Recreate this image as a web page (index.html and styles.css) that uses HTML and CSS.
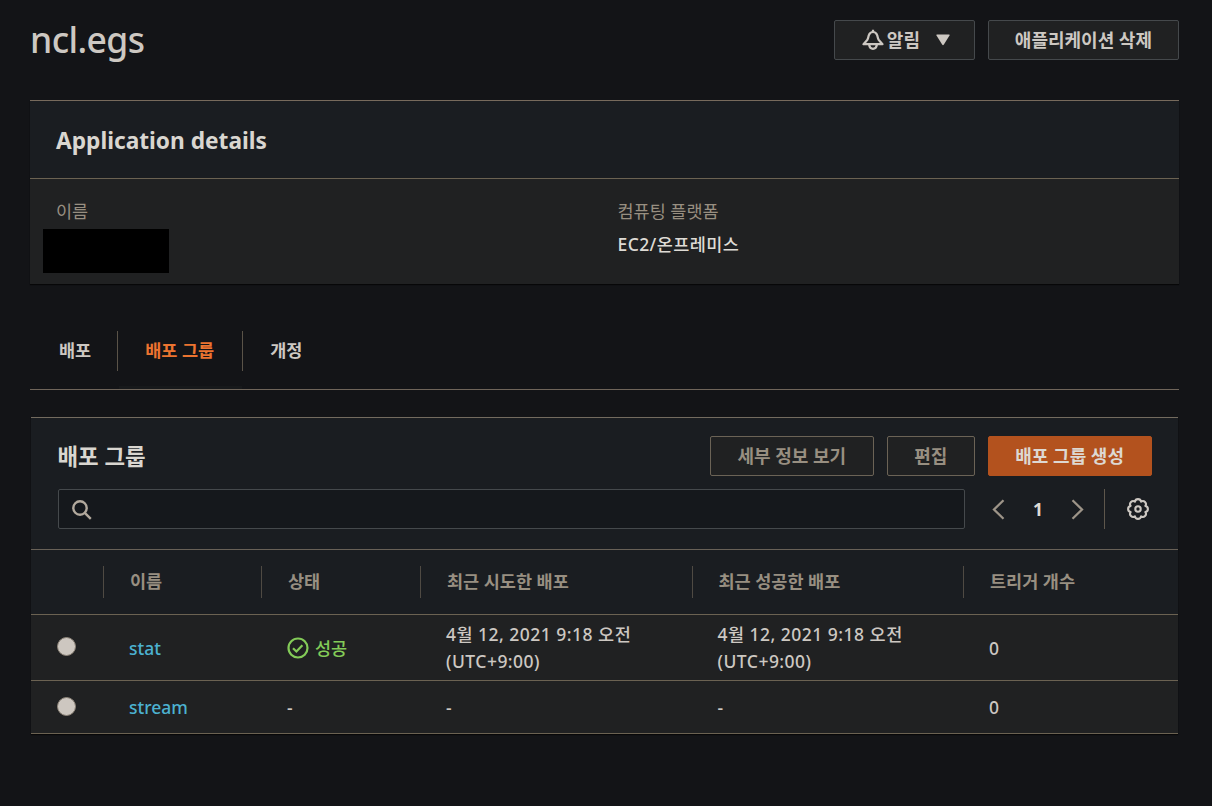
FILE: index.html
```html
<!DOCTYPE html>
<html lang="ko">

<head>
    <meta charset="UTF-8" />
    <meta name="viewport" content="width=device-width, initial-scale=1.0" />
    <title>ncl.egs</title>
    <link rel="stylesheet" href="styles.css">
</head>

<body>

    <header class="page-header">
        <h1>ncl.egs</h1>
        <div class="actions">
            <button class="btn btn-notify">
                <svg class="bell" width="22" height="22" viewBox="0 0 22 22" fill="none" stroke="currentColor" stroke-width="2.2" stroke-linejoin="round">
                    <path d="M11 .8v2.400M1.500 15.200h19L16.800 11c-1.200-1.600-1-3.500-1.700-5C14.300 4 13 3 11 3S7.700 4 6.900 6c-.7 1.500-.5 3.400-1.700 5zM7.200 16.200c.4 2.500 1.700 3.600 3.800 3.600s3.400-1.100 3.800-3.600" />
                </svg>
                <span>알림</span>
                <svg class="caret" width="14" height="12" viewBox="0 0 14 12" fill="currentColor">
                    <path d="M1 .5h12q1 0 .5 1L7.700 10.800q-.7.9-1.400 0L.5 1.500Q0 .5 1 .5z" />
                </svg>
            </button>
            <button class="btn">애플리케이션 삭제</button>
        </div>
    </header>

    <section class="details">
        <h2 class="details-title">Application details</h2>
        <div class="details-body">
            <div class="field">
                <div class="label">이름</div>
                <div class="masked"></div>
            </div>
            <div class="field">
                <div class="label">컴퓨팅 플랫폼</div>
                <div class="value">EC2/온프레미스</div>
            </div>
        </div>
    </section>

    <nav class="tabs">
        <a class="tab">배포</a>
        <a class="tab active">배포 그룹</a>
        <a class="tab">개정</a>
    </nav>

    <section class="groups">
        <div class="groups-header">
            <div class="groups-top">
                <h2>배포 그룹</h2>
                <div class="actions">
                    <button class="btn disabled">세부 정보 보기</button>
                    <button class="btn disabled">편집</button>
                    <button class="btn primary">배포 그룹 생성</button>
                </div>
            </div>
            <div class="groups-tools">
                <div class="search">
                    <svg width="20" height="20" viewBox="0 0 20 20" fill="none" stroke="currentColor" stroke-width="2.4">
                        <circle cx="8" cy="8" r="6.7" />
                        <path d="M12.800 12.800l6 6" />
                    </svg>
                </div>
                <div class="pager">
                    <svg width="13" height="21" viewBox="0 0 13 21" fill="none" stroke="currentColor" stroke-width="2.3">
                        <path d="M11.500 1.200L2 10.500l9.500 9.300" />
                    </svg>
                    <span class="page">1</span>
                    <svg width="13" height="21" viewBox="0 0 13 21" fill="none" stroke="currentColor" stroke-width="2.3">
                        <path d="M1.500 1.200L11 10.500l-9.500 9.300" />
                    </svg>
                </div>
                <div class="settings">
                    <svg width="22" height="22" viewBox="0 0 22 22" fill="none" stroke="currentColor" stroke-width="2.1" stroke-linejoin="round">
                        <path d="M14.060 3.610A3.120 3.120 0 0 1 18.390 7.940A3.120 3.120 0 0 1 18.390 14.060A3.120 3.120 0 0 1 14.060 18.390A3.120 3.120 0 0 1 7.940 18.390A3.120 3.120 0 0 1 3.610 14.060A3.120 3.120 0 0 1 3.610 7.940A3.120 3.120 0 0 1 7.940 3.610A3.120 3.120 0 0 1 14.060 3.610z" />
                        <circle cx="11" cy="11" r="2.7" />
                    </svg>
                </div>
            </div>
        </div>

        <table>
            <colgroup>
                <col class="col-select">
                <col class="col-name">
                <col class="col-status">
                <col class="col-date">
                <col class="col-date">
                <col>
            </colgroup>
            <thead>
                <tr>
                    <th><span></span></th>
                    <th><span>이름</span></th>
                    <th><span>상태</span></th>
                    <th><span>최근 시도한 배포</span></th>
                    <th><span>최근 성공한 배포</span></th>
                    <th><span>트리거 개수</span></th>
                </tr>
            </thead>
            <tbody>
                <tr class="row-tall">
                    <td><i class="radio"></i></td>
                    <td><a class="link">stat</a></td>
                    <td>
                        <div class="success">
                            <svg width="22" height="22" viewBox="0 0 22 22" fill="none" stroke="currentColor" stroke-width="2.2">
                                <circle cx="11" cy="11" r="9.5" />
                                <path d="M6 11.200l3.400 3.300 6-6.300" />
                            </svg>
                            <span>성공</span>
                        </div>
                    </td>
                    <td class="date">4월 12, 2021 9:18 오전<br>(UTC+9:00)</td>
                    <td class="date">4월 12, 2021 9:18 오전<br>(UTC+9:00)</td>
                    <td>0</td>
                </tr>
                <tr class="row-short">
                    <td><i class="radio"></i></td>
                    <td><a class="link">stream</a></td>
                    <td>-</td>
                    <td>-</td>
                    <td>-</td>
                    <td>0</td>
                </tr>
            </tbody>
        </table>
    </section>

</body>

</html>
```

FILE: styles.css
```css
* {
    box-sizing: border-box;
}

body {
    margin: 0;
    padding: 20px 33px 0 30px;
    min-height: 100vh;
    background-color: #131417;
    color: #cdc8c2;
    font-family: "Noto Sans", "Noto Sans CJK KR", sans-serif;
    font-size: 17.5px;
    line-height: 26px;
}

h1,
h2 {
    margin: 0;
}

svg {
    display: block;
    flex: none;
}

.page-header {
    display: flex;
    justify-content: space-between;
    height: 80px;
}

h1 {
    font-size: 35.5px;
    font-weight: 500;
    letter-spacing: -0.6px;
    line-height: 39px;
}

.actions {
    display: flex;
    gap: 13px;
}

.btn {
    height: 40px;
    padding: 0 26px;
    border: 1px solid #45494c;
    border-radius: 2px;
    background-color: #202122;
    color: #cdc8c2;
    font-family: inherit;
    font-size: 18px;
    font-weight: 700;
    line-height: 26px;
    white-space: nowrap;
}

.btn-notify {
    display: flex;
    align-items: center;
    width: 141px;
    padding-left: 27px;
}

.btn-notify span {
    margin: 0 16px 0 3px;
}

.btn.disabled {
    border-color: #6b6356;
    color: #988f81;
}

.btn.primary {
    border-color: #b3521e;
    background-color: #b3521e;
    color: #ddd8d2;
}

.groups .btn {
    padding: 0 26.5px;
}

.details {
    border-top: 1px solid #776a5c;
    background-color: #202122;
    box-shadow: 0 1px 1px #070708;
}

.details-title {
    height: 78px;
    padding: 0 26px;
    border-bottom: 1px solid #6b6252;
    background-color: #1a1d21;
    color: #d9d6d0;
    font-size: 22.7px;
    line-height: 80px;
}

.details-body {
    display: flex;
    height: 105px;
    padding: 19px 26px 0;
}

.field {
    flex: none;
    width: 561.5px;
}

.field + .field {
    width: auto;
}

.label {
    color: #988f81;
}

.value {
    margin-top: 7px;
    color: #dedbd5;
    font-weight: 500;
    letter-spacing: 0.4px;
}

.masked {
    width: 126px;
    height: 44px;
    margin: 5px 0 0 -13px;
    background-color: #000;
}

.tabs {
    display: flex;
    margin-top: 47px;
    height: 59px;
    padding-left: 1px;
    border-bottom: 1px solid #6f655a;
    font-weight: 700;
}

.tab {
    height: 40px;
    padding: 0 27px;
    line-height: 38px;
}

.tab:first-child {
    padding: 0 26px 0 28px;
}

.tab + .tab {
    border-left: 1px solid #5a5348;
}

.tab.active {
    position: relative;
    padding-right: 28px;
    color: #ec7430;
}

.tab.active::after {
    content: "";
    position: absolute;
    right: 0;
    bottom: -18px;
    left: 1px;
    height: 3px;
    background-color: #17191b;
}

.groups {
    margin: 27px 1px 0;
    border-top: 1px solid #736b5f;
    background-color: #202122;
    box-shadow: 0 1px 1px #070708;
}

.groups-header {
    height: 132px;
    padding: 18px 26.5px 0;
    border-bottom: 1px solid #686157;
    background-color: #1a1d21;
}

.groups-top {
    display: flex;
    justify-content: space-between;
}

.groups-top h2 {
    color: #d9d6d0;
    font-size: 22.4px;
    line-height: 42px;
    height: 40px;
}

.groups-tools {
    display: flex;
    align-items: center;
    margin-top: 13px;
}

.search {
    display: flex;
    align-items: center;
    width: 907.5px;
    height: 40px;
    padding: 1px 0 0 13px;
    border: 1px solid #45494c;
    border-radius: 2px;
    background-color: #15181c;
    color: #b2a99d;
}

.pager {
    display: flex;
    align-items: center;
    justify-content: space-between;
    width: 92px;
    margin-left: 27px;
    color: #9d9488;
}

.page {
    color: #dedbd5;
    font-weight: 700;
}

.settings {
    display: flex;
    align-items: center;
    height: 40px;
    margin-left: 20px;
    padding-left: 22px;
    border-left: 1px solid #5e574c;
    color: #cdc8c2;
}

table {
    width: 100%;
    table-layout: fixed;
    border-spacing: 0;
}

.col-select {
    width: 73px;
}

.col-name {
    width: 158px;
}

.col-status {
    width: 159px;
}

.col-date {
    width: 271.5px;
}

th {
    height: 65px;
    padding: 0;
    border-bottom: 1px solid #6b6252;
    background-color: #1a1d21;
    color: #988f81;
    font-weight: 700;
    text-align: left;
}

th span {
    display: block;
    height: 32px;
    padding-left: 26px;
    border-right: 1px solid #4f4a43;
    line-height: 31px;
}

th:last-child span {
    border-right: none;
}

td {
    padding: 0 0 0 25px;
    border-bottom: 1px solid #6b6252;
    font-weight: 500;
}

.row-tall td {
    height: 66px;
}

.row-short td {
    height: 53px;
}

.radio {
    display: block;
    width: 19px;
    height: 19px;
    margin: -2px 0 0 1px;
    border: 1px solid #8c8378;
    border-radius: 50%;
    background-color: #cdc7c0;
}

.link {
    color: #4cb2d0;
}

.success {
    display: flex;
    align-items: center;
    gap: 6px;
    color: #83cb58;
}

.date {
    line-height: 27px;
    letter-spacing: 0.48px;
}
```
